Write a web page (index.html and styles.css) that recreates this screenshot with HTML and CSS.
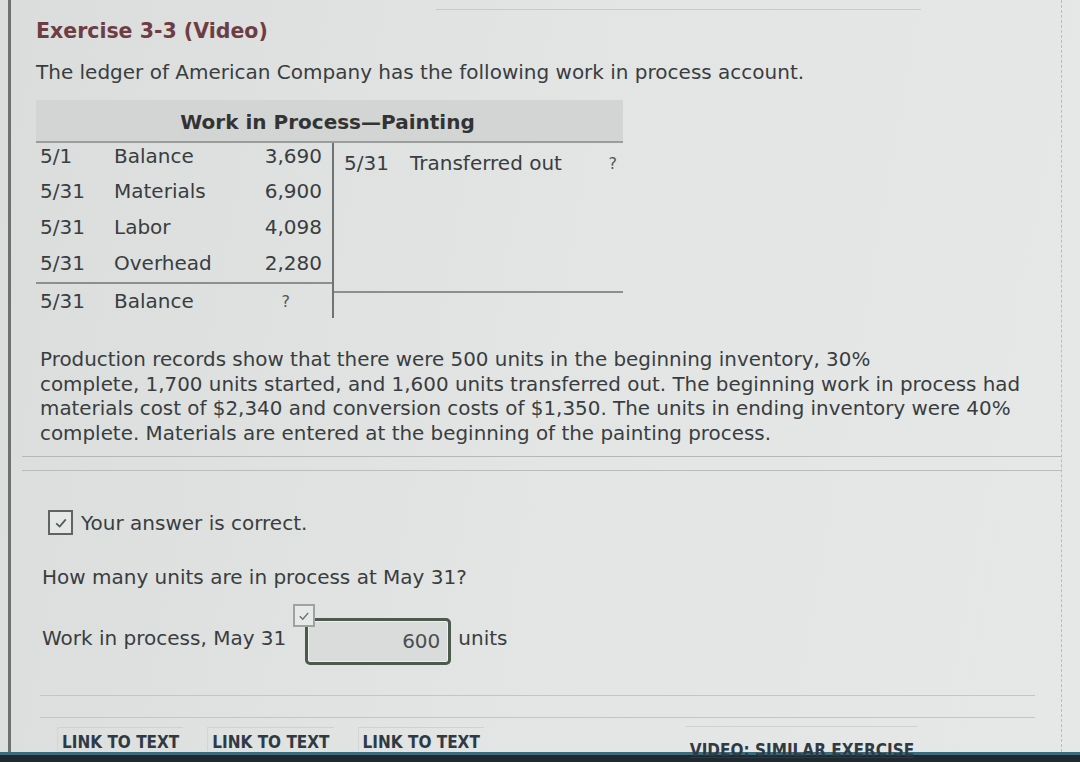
FILE: index.html
```html
<!DOCTYPE html>
<html>
<head>
<meta charset="utf-8">
<link rel="stylesheet" href="styles.css">
</head>
<body>
<div class="screen">
  <div class="page">
    <div class="topline"></div>
    <h1 class="title">Exercise 3-3 (Video)</h1>
    <p class="intro">The ledger of American Company has the following work in process account.</p>

    <div class="ledger">
      <div class="ledger-head">Work in Process—Painting</div>
      <div class="ledger-body">
        <div class="side debit">
          <div class="row"><span class="d">5/1</span><span class="desc">Balance</span><span class="amt">3,690</span></div>
          <div class="row"><span class="d">5/31</span><span class="desc">Materials</span><span class="amt">6,900</span></div>
          <div class="row"><span class="d">5/31</span><span class="desc">Labor</span><span class="amt">4,098</span></div>
          <div class="row"><span class="d">5/31</span><span class="desc">Overhead</span><span class="amt">2,280</span></div>
          <div class="row total"><span class="d">5/31</span><span class="desc">Balance</span><span class="amt q">?</span></div>
        </div>
        <div class="side credit">
          <div class="row"><span class="d">5/31</span><span class="desc">Transferred out</span><span class="amt q">?</span></div>
          <div class="credit-fill"></div>
          <div class="credit-total"></div>
        </div>
      </div>
    </div>

    <p class="problem">Production records show that there were 500 units in the beginning inventory, 30%<br>complete, 1,700 units started, and 1,600 units transferred out. The beginning work in process had<br>materials cost of $2,340 and conversion costs of $1,350. The units in ending inventory were 40%<br>complete. Materials are entered at the beginning of the painting process.</p>

    <div class="sep-a"></div>
    <div class="sep-b"></div>

    <div class="answer">
      <div class="status">
        <span class="chk"><svg viewBox="0 0 20 20" width="16" height="16"><path d="M4 10.5 L8.3 14.5 L16 5.5" fill="none" stroke="#4f5a55" stroke-width="2.2"/></svg></span>
        <span>Your answer is correct.</span>
      </div>
      <p class="question">How many units are in process at May 31?</p>
      <div class="entry">
        <span class="label">Work in process, May 31</span>
        <span class="field">
          <span class="mini-chk"><svg viewBox="0 0 20 20" width="14" height="14"><path d="M4 10.5 L8.3 14.5 L16 5.5" fill="none" stroke="#66706b" stroke-width="2"/></svg></span>
          <span class="input">600</span>
        </span>
        <span class="unit">units</span>
      </div>
    </div>

    <div class="sep-c"></div>
    <div class="sep-d"></div>

    <div class="links">
      <a class="lnk">LINK TO TEXT</a>
      <a class="lnk">LINK TO TEXT</a>
      <a class="lnk">LINK TO TEXT</a>
      <a class="lnk video">VIDEO: SIMILAR EXERCISE</a>
    </div>
  </div>
  <div class="bezel"></div>
</div>
</body>
</html>
```

FILE: styles.css
```css
* { box-sizing: border-box; }
html, body {
  margin: 0;
  padding: 0;
  width: 1080px;
  height: 762px;
  overflow: hidden;
  background: #dfe2e1;
}
body {
  font-family: "DejaVu Sans", Verdana, sans-serif;
  color: #3a3d3f;
}
.screen {
  width: 1080px;
  height: 762px;
  display: flex;
  flex-direction: column;
  background: linear-gradient(100deg, #dadddc 0%, #e2e5e4 50%, #e6e8e8 100%);
}
.page {
  flex: 1;
  margin-left: 8px;
  margin-right: 18px;
  border-left: 3px solid #6d7170;
  border-right: 1px dashed #b9bcbb;
  padding-left: 25px;
  position: relative;
}
.topline {
  height: 10px;
  border-bottom: 1px solid #c8cbca;
  margin-right: 140px;
  margin-left: 400px;
}
.title {
  margin: 8px 0 0 0;
  font-size: 20.5px;
  font-weight: bold;
  color: #6e3d44;
  line-height: 26px;
}
.intro {
  margin: 15px 0 0 0;
  font-size: 20px;
  line-height: 26px;
  color: #3a3d3f;
}
.ledger {
  margin-top: 15px;
  width: 587px;
  font-size: 20px;
}
.ledger-head {
  height: 43px;
  background: #d2d5d4;
  text-align: center;
  font-weight: bold;
  line-height: 44px;
  color: #333;
  border-bottom: 2px solid #9a9d9c;
  padding-right: 4px;
}
.ledger-body {
  display: flex;
}
.side {
  display: flex;
  flex-direction: column;
}
.debit {
  width: 298px;
  border-right: 2px solid #6f7372;
}
.credit {
  flex: 1;
}
.row {
  display: flex;
  align-items: center;
  height: 36px;
  padding-left: 4px;
  padding-right: 10px;
}
.debit .row:first-child { height: 30px; padding-bottom: 4px; }
.row .d { width: 74px; }
.row .desc { flex: 1; }
.row .amt { text-align: right; }
.row .q { font-size: 16px; color: #555; padding-right: 32px; }
.credit .row { padding-left: 10px; padding-right: 6px; margin-top: 2px; }
.credit .row .d { width: 66px; }
.credit .row .q { padding-right: 0; }
.debit .row.total {
  border-top: 2px solid #8c8f8e;
  height: 36px;
  margin-top: 1px;
}
.credit-fill { height: 110px; }
.credit-total { border-top: 2px solid #8c8f8e; }

.problem {
  margin: 30px 0 0 4px;
  width: 1010px;
  font-size: 19.9px;
  line-height: 24.5px;
  color: #3a3d3f;
  white-space: nowrap;
}
.sep-a {
  margin: 10px 0 0 -14px;
  border-bottom: 1px solid #b5b8b7;
}
.sep-b {
  margin: 13px 0 0 -14px;
  border-bottom: 1px solid #babdbc;
}
.answer {
  padding-left: 4px;
}
.status {
  margin-top: 39px;
  display: flex;
  align-items: center;
  gap: 8px;
  font-size: 20px;
  margin-left: 8px;
}
.chk {
  width: 25px;
  height: 25px;
  border: 2px solid #5d6462;
  display: flex;
  align-items: center;
  justify-content: center;
  background: #e4e7e6;
}
.question {
  margin: 29px 0 0 2px;
  font-size: 20px;
  line-height: 26px;
}
.entry {
  margin-top: 22px;
  display: flex;
  align-items: center;
  font-size: 20px;
  margin-left: 2px;
}
.label { margin-right: 19px; margin-top: -2px; }
.field {
  position: relative;
  display: inline-flex;
  margin-top: 6px;
}
.input {
  width: 146px;
  height: 47px;
  border: 3px solid #4b5a4c;
  border-radius: 5px;
  background: #d9dcdb;
  text-align: right;
  padding-right: 8px;
  padding-top: 8px;
  color: #4a4e4f;
  box-shadow: inset 0 0 0 1px #eef0ef;
}
.mini-chk {
  position: absolute;
  left: -12px;
  top: -14px;
  width: 22px;
  height: 23px;
  border: 2px solid #9ea3a0;
  background: #e6e9e8;
  display: flex;
  align-items: center;
  justify-content: center;
}
.unit { margin-left: 7px; margin-top: -2px; }

.sep-c {
  margin: 30px 26px 0 4px;
  border-bottom: 1px solid #c3c6c5;
}
.sep-d {
  margin: 21px 26px 0 4px;
  border-bottom: 1px solid #c3c6c5;
}
.links {
  display: flex;
  align-items: flex-end;
  margin-top: 8px;
  padding-left: 21px;
  font-family: "Liberation Sans Narrow", "DejaVu Sans Condensed", sans-serif;
  font-weight: bold;
  font-size: 17px;
  color: #2f3a44;
}
.lnk {
  padding: 5px 4px 0 4px;
  border-top: 1px solid #cfd2d1;
  border-left: 1px solid #d2d5d4;
  margin-right: 24px;
  line-height: 18px;
}
.lnk.video {
  margin-left: 178px;
  text-decoration: underline;
  padding-top: 14px;
  border-left: none;
  margin-bottom: -8px;
  margin-right: 0;
}
.bezel {
  height: 10px;
  background: #1e2a30;
  border-top: 3px solid #3d6b7e;
}
```
